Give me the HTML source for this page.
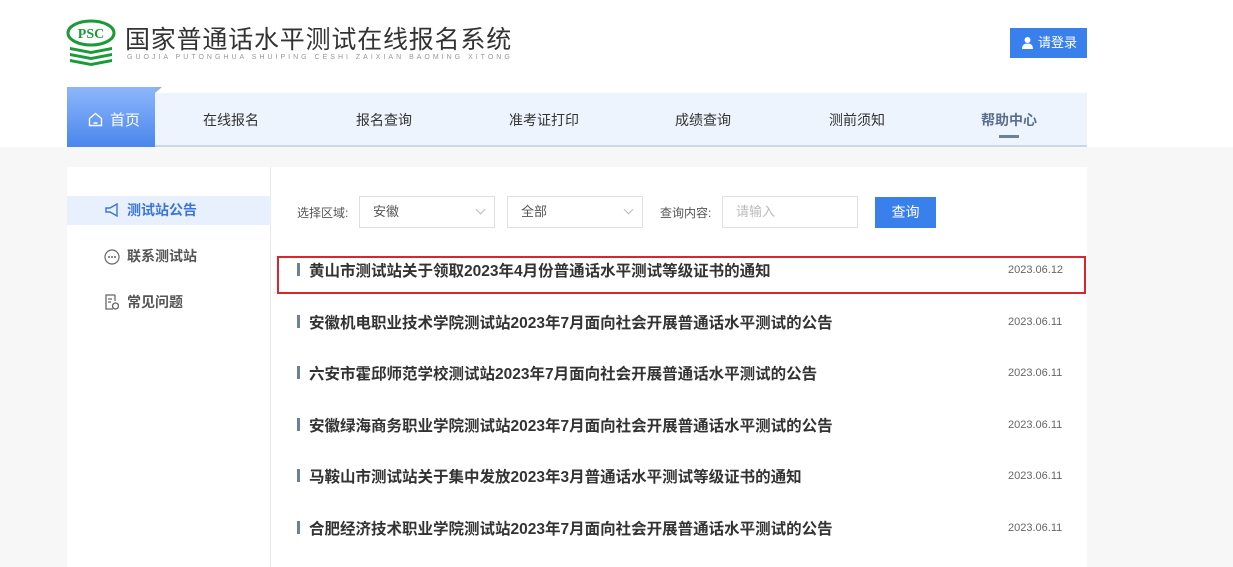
<!DOCTYPE html>
<html><head><meta charset="utf-8"><style>
*{margin:0;padding:0;box-sizing:border-box}
body{width:1233px;height:558px;overflow:hidden;background:#f7f7f7;font-family:"Liberation Sans","Noto Sans CJK SC",sans-serif;position:relative}
.hdr{position:absolute;left:0;top:0;width:1233px;height:147px;background:#fff}
.abs{position:absolute}
.nav{position:absolute;left:67px;top:93px;width:1020px;height:54px;background:#edf4fd;border-bottom:2px solid #c9d7ea}
.nav span{position:absolute;top:17px;font-size:14px;color:#333;transform:translateX(-50%);white-space:nowrap}
.home{position:absolute;left:67px;top:87px;width:88px;height:60px;background:linear-gradient(#8db7fb,#4a86ec);color:#fff;font-size:15px}
.home:before{content:"";position:absolute;right:-7px;top:0;border-left:7px solid #8fb0e0;border-bottom:6px solid transparent}
.panel{position:absolute;left:67px;top:167px;width:1020px;height:400px;background:#fff}
.side{position:absolute;left:0;top:0;width:204px;height:400px;border-right:1px solid #e8e8e8}
.si{position:absolute;left:0;width:204px;height:29px;font-size:14px;font-weight:bold;color:#555;padding-left:60px;line-height:29px}
.item{position:absolute;left:230px;font-size:15.5px;font-weight:bold;color:#333;white-space:nowrap}
.item:before{content:"";position:absolute;left:0;top:4px;width:3px;height:13px;background:#6e7f99}
.item b{padding-left:12px;font-weight:bold}
.date{position:absolute;left:941px;font-size:11px;color:#666}
.sel{position:absolute;top:29px;height:32px;border:1px solid #dcdfe6;font-size:13px;color:#555;padding-left:13px;line-height:30px}
.sel i{position:absolute;right:10px;top:9px;width:7px;height:7px;border-right:1px solid #bbb;border-bottom:1px solid #bbb;transform:rotate(45deg)}
.lab{position:absolute;top:37px;font-size:12px;color:#555}
</style></head><body>
<div class="hdr">
<svg class="abs" style="left:66px;top:17px" width="50" height="50" viewBox="0 0 50 50">
<ellipse cx="25" cy="16" rx="23" ry="12" fill="none" stroke="#1b9a3a" stroke-width="3"/>
<text x="25" y="21" font-family="Liberation Serif" font-weight="bold" font-size="14" fill="#1b9a3a" text-anchor="middle">PSC</text>
<path d="M4 30 L25 34 L46 30 L46 33 L25 37 L4 33Z M4 36 L25 40 L46 36 L46 39 L25 43 L4 39Z M4 42 L25 46 L46 42 L46 45 L25 49 L4 45Z" fill="#1b9a3a"/>
</svg>
<div class="abs" style="left:125px;top:22px;font-size:25px;color:#333;letter-spacing:0.8px;font-family:'Noto Sans CJK SC',sans-serif;line-height:32px">国家普通话水平测试在线报名系统</div>
<div class="abs" style="left:127px;top:54px;font-size:7px;color:#999;letter-spacing:3px;white-space:nowrap">GUOJIA PUTONGHUA SHUIPING CESHI ZAIXIAN BAOMING XITONG</div>
<div class="abs" style="left:1010px;top:28px;width:77px;height:30px;background:#3a80ec;color:#fff;font-size:13px;line-height:30px;padding-left:28px">请登录
<svg class="abs" style="left:12px;top:9px" width="11" height="12" viewBox="0 0 11 12"><circle cx="5.5" cy="3" r="3" fill="#fff"/><path d="M0 12 Q0 6.5 5.5 6.5 Q11 6.5 11 12Z" fill="#fff"/></svg></div>
<div class="nav">
<span style="left:164px">在线报名</span><span style="left:317px">报名查询</span><span style="left:477px">准考证打印</span><span style="left:636px">成绩查询</span><span style="left:790px">测前须知</span>
<span style="left:942px;color:#5a6f90;font-weight:bold">帮助中心</span>
<div class="abs" style="left:932px;top:42px;width:20px;height:3px;background:#6e7f99"></div>
</div>
<div class="home"><svg class="abs" style="left:21px;top:25px" width="15" height="15" viewBox="0 0 15 15"><path d="M1.5 6.5 L7.5 1.5 L13.5 6.5 V13.5 H1.5Z M5.5 11 H9.5" fill="none" stroke="#fff" stroke-width="1.4"/></svg><span class="abs" style="left:43px;top:22px">首页</span></div>
</div>
<div class="panel">
<div class="side">
<div class="si" style="top:29px;background:#e8f0fd;color:#3a75d8">测试站公告</div>
<svg class="abs" style="left:38px;top:36px" width="14" height="14" viewBox="0 0 14 14"><path d="M1 5 H5 L12 1 V13 L5 9 H1Z" fill="none" stroke="#3a75d8" stroke-width="1.4"/></svg>
<div class="si" style="top:75px">联系测试站</div>
<svg class="abs" style="left:37px;top:82px" width="16" height="16" viewBox="0 0 16 16"><circle cx="8" cy="8" r="7" fill="none" stroke="#666" stroke-width="1.2"/><circle cx="5" cy="8" r="1" fill="#666"/><circle cx="8" cy="8" r="1" fill="#666"/><circle cx="11" cy="8" r="1" fill="#666"/></svg>
<div class="si" style="top:121px">常见问题</div>
<svg class="abs" style="left:38px;top:127px" width="14" height="16" viewBox="0 0 14 16"><path d="M10 1 H1 V15 H8 M10 1 V7 M3 5 H7 M3 8 H6" fill="none" stroke="#666" stroke-width="1.3"/><circle cx="10.5" cy="12" r="3" fill="none" stroke="#666" stroke-width="1.3"/></svg>
</div>
<div class="lab" style="left:230px">选择区域:</div>
<div class="sel" style="left:292px;width:136px">安徽<i></i></div>
<div class="sel" style="left:440px;width:136px">全部<i></i></div>
<div class="lab" style="left:593px">查询内容:</div>
<div class="sel" style="left:655px;width:136px;color:#bbb">请输入</div>
<div class="abs" style="left:808px;top:30px;width:61px;height:31px;background:#3a80ec;color:#fff;font-size:14px;text-align:center;line-height:31px">查询</div>
<div class="abs" style="left:210px;top:89px;width:809px;height:38px;border:2px solid #d9252b"></div>
<div class="item" style="top:92px"><b>黄山市测试站关于领取2023年4月份普通话水平测试等级证书的通知</b></div><div class="date" style="top:97px">2023.06.12</div>
<div class="item" style="top:144px"><b>安徽机电职业技术学院测试站2023年7月面向社会开展普通话水平测试的公告</b></div><div class="date" style="top:149px">2023.06.11</div>
<div class="item" style="top:195px"><b>六安市霍邱师范学校测试站2023年7月面向社会开展普通话水平测试的公告</b></div><div class="date" style="top:200px">2023.06.11</div>
<div class="item" style="top:247px"><b>安徽绿海商务职业学院测试站2023年7月面向社会开展普通话水平测试的公告</b></div><div class="date" style="top:252px">2023.06.11</div>
<div class="item" style="top:298px"><b>马鞍山市测试站关于集中发放2023年3月普通话水平测试等级证书的通知</b></div><div class="date" style="top:303px">2023.06.11</div>
<div class="item" style="top:350px"><b>合肥经济技术职业学院测试站2023年7月面向社会开展普通话水平测试的公告</b></div><div class="date" style="top:355px">2023.06.11</div>
</div>
</body></html>
